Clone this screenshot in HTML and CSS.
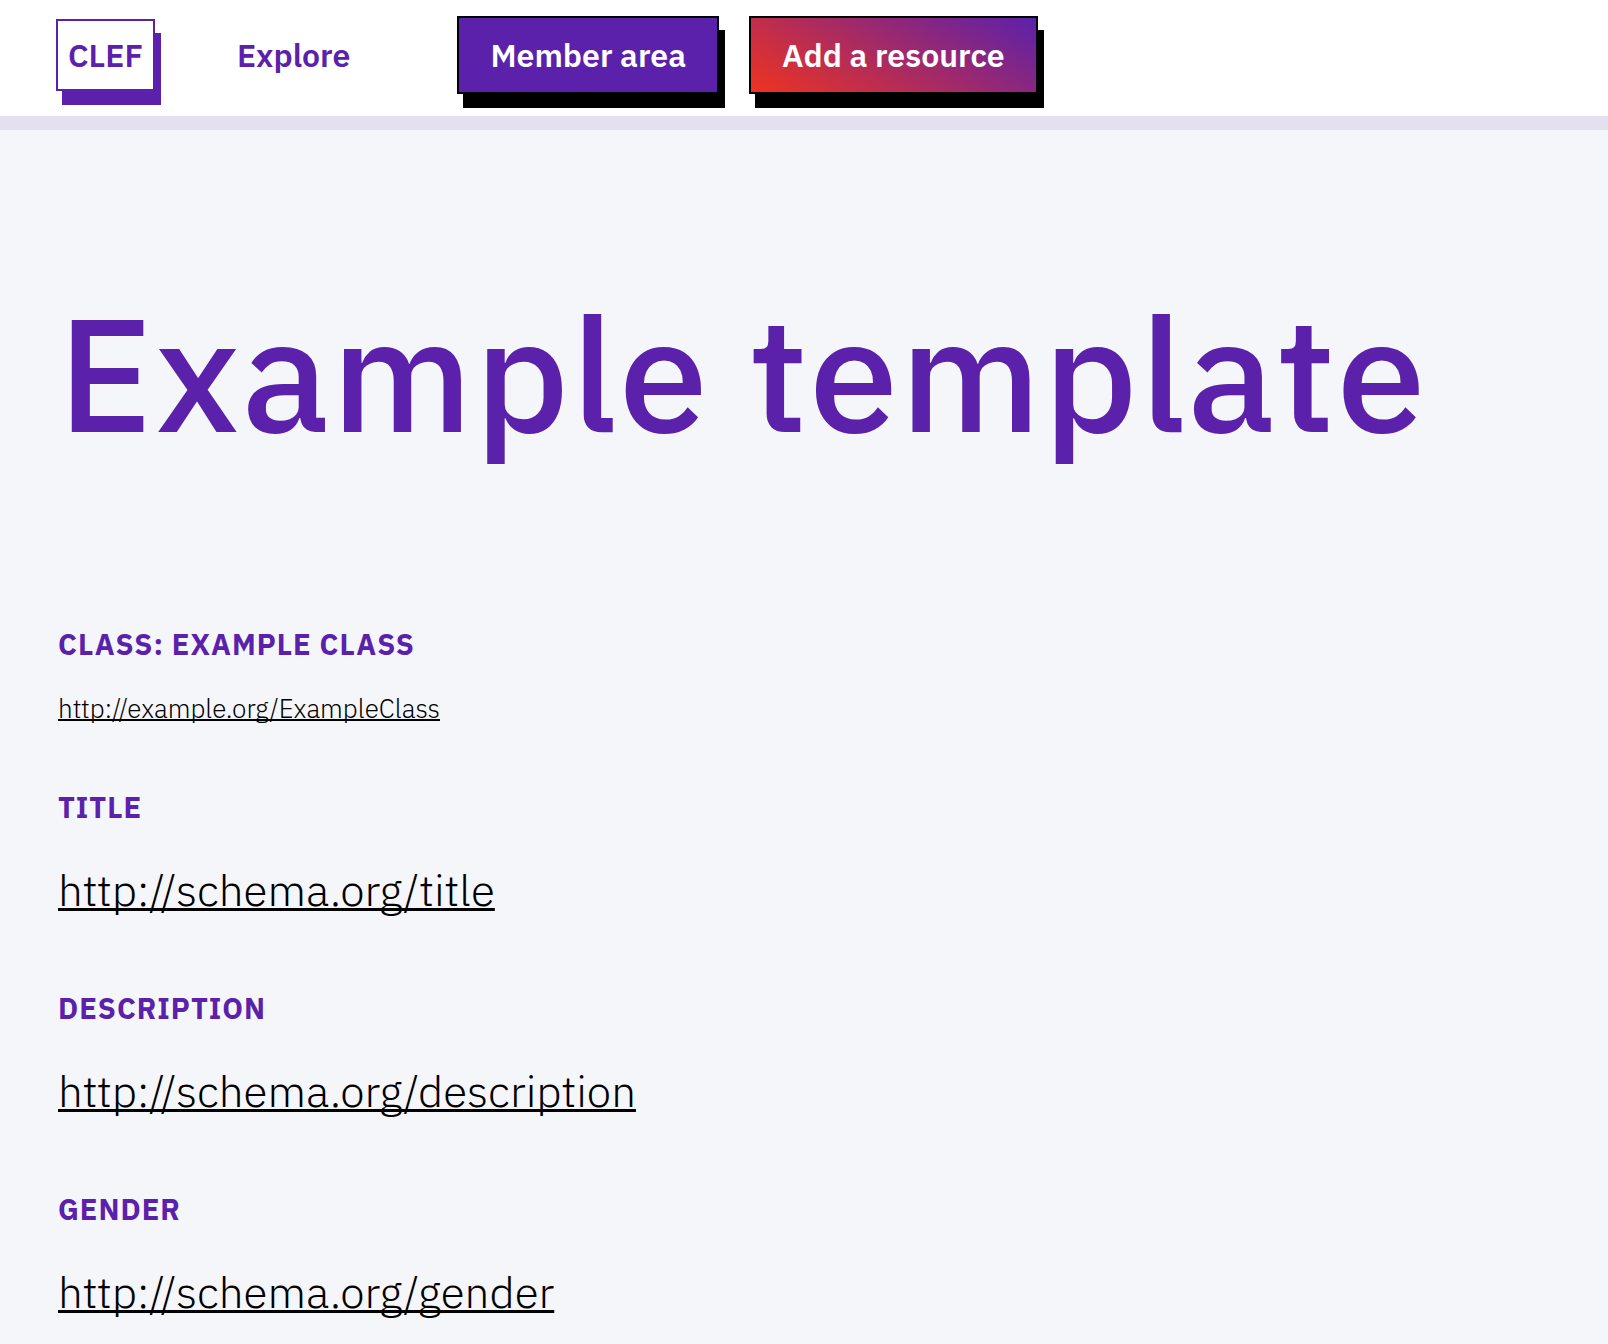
FILE: index.html
```html
<!DOCTYPE html>
<html lang="en">
<head>
<meta charset="utf-8">
<meta name="viewport" content="width=device-width, initial-scale=1">
<title>Example template</title>
<link rel="stylesheet" href="styles.css">
</head>
<body>
<header class="site-header">
  <nav class="nav">
    <a class="logo" href="#">CLEF</a>
    <a class="nav-link" href="#">Explore</a>
    <div class="actions">
      <button class="button" type="button">Member area</button>
      <button class="button button-accent" type="button">Add a resource</button>
    </div>
  </nav>
</header>
<main class="content">
  <h1 class="title">Example template</h1>
  <section class="field field-class">
    <h2 class="label">Class: Example class</h2>
    <a class="uri uri-small" href="#">http://example.org/ExampleClass</a>
  </section>
  <section class="field">
    <h2 class="label">Title</h2>
    <a class="uri" href="#">http://schema.org/title</a>
  </section>
  <section class="field">
    <h2 class="label">Description</h2>
    <a class="uri" href="#">http://schema.org/description</a>
  </section>
  <section class="field">
    <h2 class="label">Gender</h2>
    <a class="uri" href="#">http://schema.org/gender</a>
  </section>
</main>
</body>
</html>
```
FILE: styles.css
```css
:root {
  --purple: #5b21ab;
  --red: #ef3320;
}

* {
  box-sizing: border-box;
}

body {
  margin: 0;
  background: #f5f6fa;
  color: #000;
  font-family: "IBM Plex Sans", Roboto, sans-serif;
}

.site-header {
  padding: 16px 56px 22px;
  background: #fff;
  border-bottom: 14px solid #e5e0f1;
}

.nav {
  display: flex;
  align-items: center;
}

.logo,
.nav-link,
.button {
  font-size: 32px;
  font-weight: 600;
  line-height: 44px;
  white-space: nowrap;
  text-decoration: none;
  color: var(--purple);
}

.logo {
  padding: 12px 10px;
  border: 2px solid var(--purple);
  background: #fff;
  box-shadow: 6px 14px 0 var(--purple);
}

.nav-link {
  margin: 0 107px 0 82px;
}

.actions {
  display: flex;
  gap: 30px;
}

.button {
  height: 78px;
  padding: 0 31px;
  border: 2px solid #000;
  background: var(--purple);
  box-shadow: 6px 14px 0 #000;
  color: #fff;
  font-family: inherit;
}

.button-accent {
  background: linear-gradient(30deg, var(--red), var(--purple));
}

.content {
  padding: 122px 58px 0;
}

.title {
  margin: 0 0 128px;
  color: var(--purple);
  font-size: 160px;
  font-weight: 500;
  line-height: 240px;
  letter-spacing: 2px;
}

.field {
  margin-bottom: 60px;
}

.field-class {
  margin-bottom: 53px;
}

.label {
  margin: 0 0 25px;
  color: var(--purple);
  font-size: 29px;
  font-weight: 700;
  line-height: 48px;
  letter-spacing: 1px;
  text-transform: uppercase;
}

.uri {
  display: block;
  width: fit-content;
  color: #000;
  font-size: 44px;
  font-weight: 300;
  line-height: 68px;
  text-decoration-thickness: 3px;
  text-decoration-skip-ink: none;
}

.field-class .label {
  margin-bottom: 18px;
}

.uri-small {
  font-size: 26px;
  line-height: 44px;
  text-decoration-thickness: 2px;
}
```
